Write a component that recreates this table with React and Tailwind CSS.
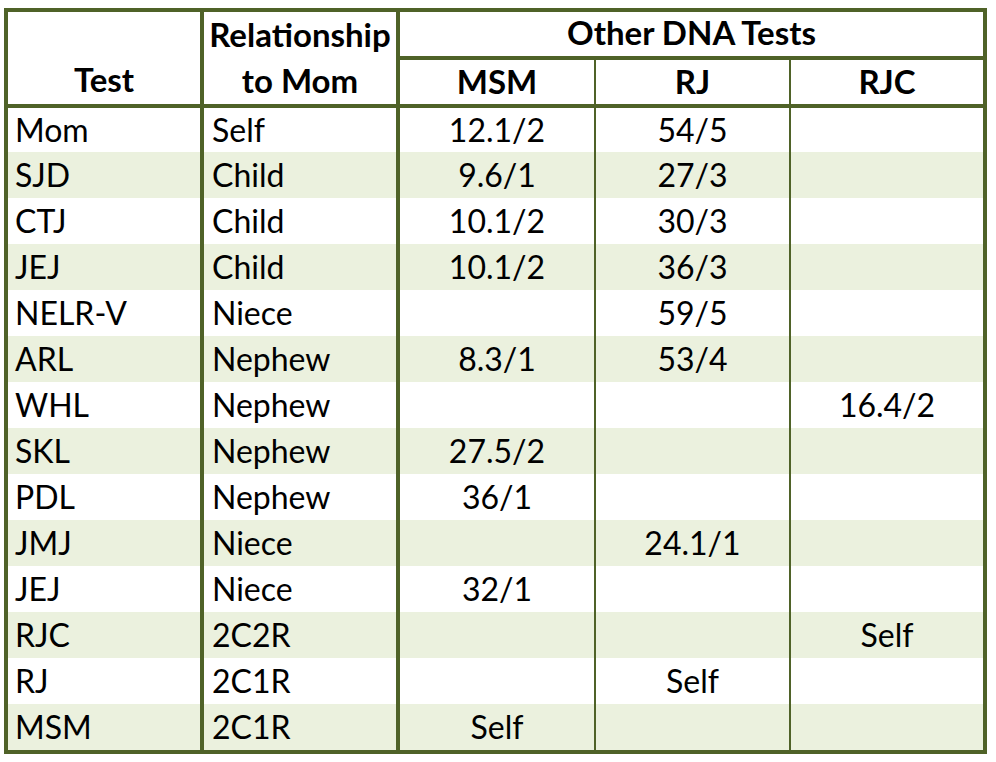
import React from 'react';

const rows = [
    ['Mom', 'Self', '12.1/2', '54/5', ''],
    ['SJD', 'Child', '9.6/1', '27/3', ''],
    ['CTJ', 'Child', '10.1/2', '30/3', ''],
    ['JEJ', 'Child', '10.1/2', '36/3', ''],
    ['NELR-V', 'Niece', '', '59/5', ''],
    ['ARL', 'Nephew', '8.3/1', '53/4', ''],
    ['WHL', 'Nephew', '', '', '16.4/2'],
    ['SKL', 'Nephew', '27.5/2', '', ''],
    ['PDL', 'Nephew', '36/1', '', ''],
    ['JMJ', 'Niece', '', '24.1/1', ''],
    ['JEJ', 'Niece', '32/1', '', ''],
    ['RJC', '2C2R', '', '', 'Self'],
    ['RJ', '2C1R', '', 'Self', ''],
    ['MSM', '2C1R', 'Self', '', ''],
];

const App = () => {
    return (
        <div className="min-h-screen bg-white pt-[8px] pl-[4px]" style={{ fontFamily: 'Lato, "Open Sans", sans-serif' }}>
            <div className="w-[983px] border-4 border-[#4F6228] text-black">
                <table className="w-[975px] table-fixed border-collapse text-[32px] leading-none">
                    <colgroup>
                        <col className="w-[194px]" />
                        <col className="w-[196px]" />
                        <col className="w-[197px]" />
                        <col className="w-[195px]" />
                        <col className="w-[193px]" />
                    </colgroup>
                    <thead className="font-bold text-[33px]">
                        <tr className="h-[46px]">
                            <th rowSpan={2} className="border-r-4 border-b-4 border-[#4F6228] align-bottom pb-[8px] text-center">
                                Test
                            </th>
                            <th rowSpan={2} className="border-r-4 border-b-4 border-[#4F6228] text-center align-top">
                                <div className="leading-[44px]">Relationship</div>
                                <div className="leading-[48px]">to Mom</div>
                            </th>
                            <th colSpan={3} className="border-b-4 border-[#4F6228] text-center align-middle pb-[4px]">
                                Other DNA Tests
                            </th>
                        </tr>
                        <tr className="h-[48px]">
                            <th className="border-r-2 border-b-4 border-[#4F6228] text-center align-middle pb-[2px]">MSM</th>
                            <th className="border-r-2 border-b-4 border-[#4F6228] text-center align-middle pb-[2px]">RJ</th>
                            <th className="border-b-4 border-[#4F6228] text-center align-middle pb-[2px]">RJC</th>
                        </tr>
                    </thead>
                    <tbody>
                        {rows.map((r, i) => (
                            <tr key={i} className={i % 2 === 1 ? 'h-[46px] bg-[#EBF1DE]' : 'h-[46px] bg-white'}>
                                <td className="border-r-4 border-[#4F6228] pl-[7px] align-middle">{r[0]}</td>
                                <td className="border-r-4 border-[#4F6228] pl-[8px] align-middle">{r[1]}</td>
                                <td className="border-r-2 border-[#4F6228] text-center align-middle">{r[2]}</td>
                                <td className="border-r-2 border-[#4F6228] text-center align-middle">{r[3]}</td>
                                <td className="text-center align-middle">{r[4]}</td>
                            </tr>
                        ))}
                    </tbody>
                </table>
            </div>
        </div>
    );
};

export default App;
